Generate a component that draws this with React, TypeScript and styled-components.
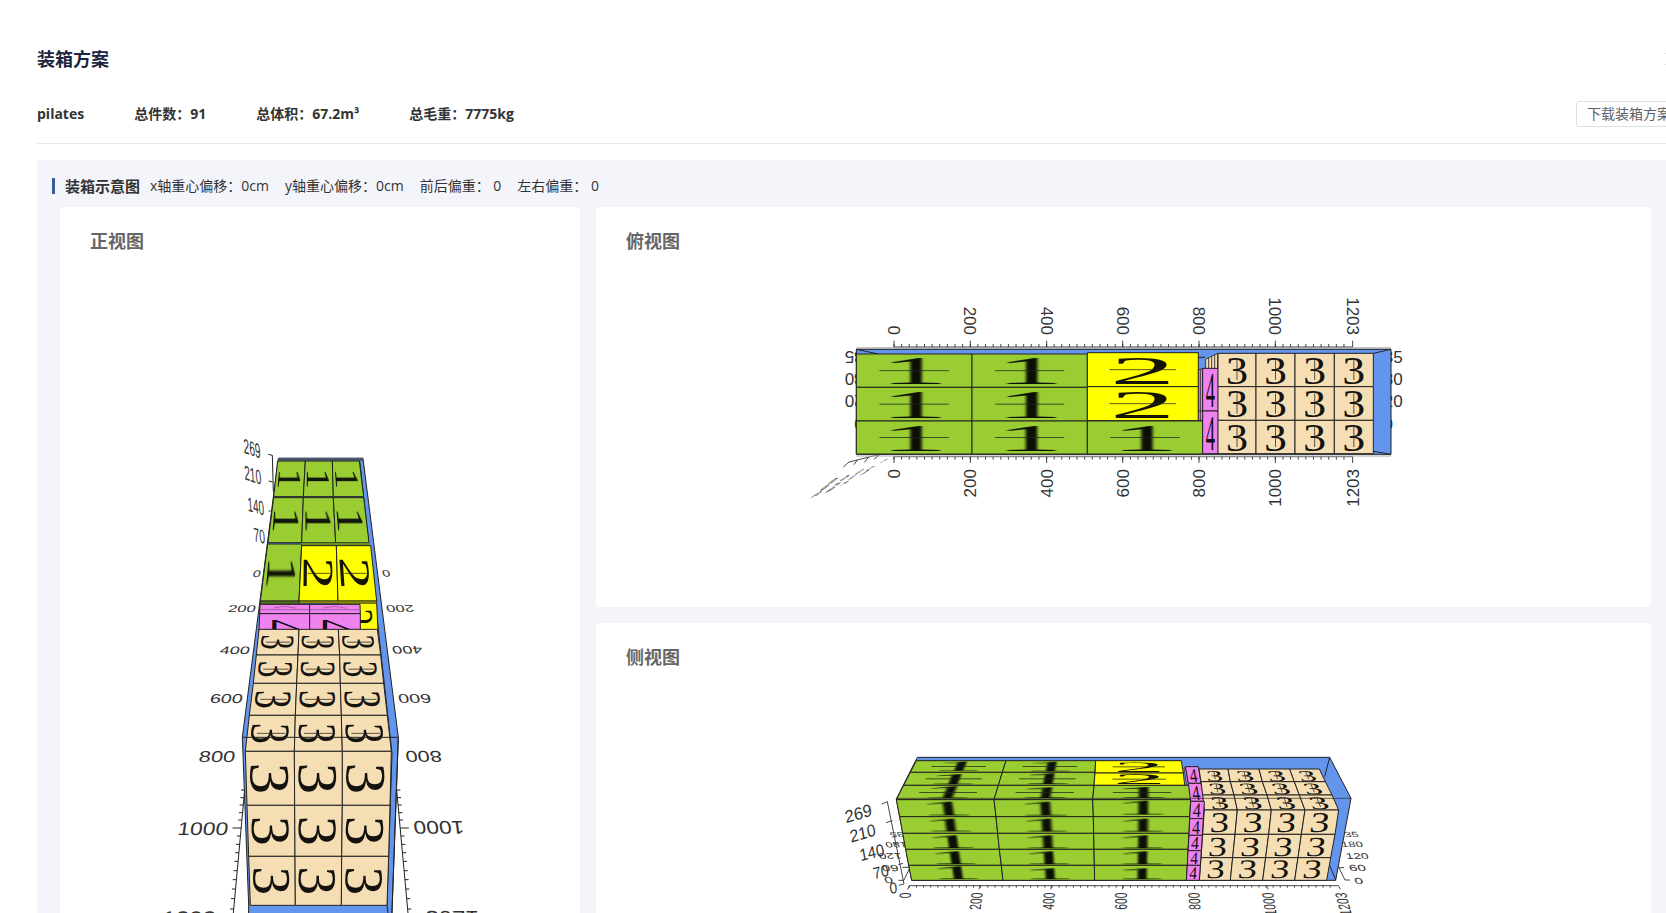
import React from 'react';
import styled, { createGlobalStyle } from 'styled-components';
import { X } from 'lucide-react';

const GlobalStyle = createGlobalStyle`
  * { box-sizing: border-box; }
  body {
    margin: 0;
    background: #fff;
    color: #333;
    font-family: 'Open Sans', 'Noto Sans CJK SC', sans-serif;
    font-size: 14px;
    line-height: 20px;
  }
`;

const Page = styled.main`
  height: 100vh;
  overflow: hidden;
  padding: 44px 0 0 37px;
`;

const Header = styled.header`
  display: flex;
  align-items: center;
  justify-content: space-between;
  height: 30px;
  margin-bottom: 24px;
`;

const Title = styled.h1`
  margin: 0;
  font-size: 18px;
  line-height: 28px;
  color: #1b2440;
`;

const CloseButton = styled.button`
  display: flex;
  flex: none;
  margin-right: -15px;
  padding: 0;
  border: 0;
  background: none;
  color: #909399;
`;

const Summary = styled.section`
  display: flex;
  align-items: center;
  gap: 50px;
  height: 46px;
  padding-bottom: 14px;
  border-bottom: 1px solid #e8e8ea;
  font-weight: 700;
  margin-bottom: 16px;
  white-space: nowrap;
`;

const DownloadButton = styled.button`
  flex: none;
  height: 26px;
  margin: 0 -16px 0 auto;
  padding: 0 10px;
  border: 1px solid #dcdfe6;
  border-radius: 3px;
  background: #fff;
  color: #606266;
  font: inherit;
  font-weight: 400;
`;

const Panel = styled.section`
  padding: 16px 15px;
  border-radius: 4px 0 0 4px;
  background: #f4f5fa;
`;

const PanelHeader = styled.div`
  display: flex;
  align-items: center;
  gap: 16px;
  height: 20px;
  margin-bottom: 11px;
  white-space: nowrap;
`;

const PanelTitle = styled.h2`
  display: flex;
  align-items: center;
  gap: 10px;
  margin: 0 -6px 0 0;
  font-size: 15px;
  line-height: 20px;

  &::before {
    content: '';
    width: 3px;
    height: 16px;
    background: #3a5c9b;
  }
`;

const Views = styled.div`
  display: grid;
  grid-template-columns: 520fr 1055fr;
  gap: 16px;
  padding-left: 8px;
`;

const Card = styled.article<{ $tall?: boolean }>`
  display: flex;
  flex-direction: column;
  align-items: center;
  grid-row: ${(p) => (p.$tall ? 'span 2' : 'auto')};
  min-width: 0;
  border-radius: 4px;
  background: #fff;
`;

const CardTitle = styled.h3`
  align-self: stretch;
  margin: 0;
  padding: 20px 30px;
  font-size: 18px;
  line-height: 28px;
  color: #666;
`;

const Drawing = styled.svg`
  display: block;
  flex: none;
  max-width: 100%;
`;

const Definitions = styled.svg`
  position: absolute;
  width: 0;
  height: 0;
`;

const AxisText = styled.text`
  font-family: 'Liberation Sans', sans-serif;
  font-size: 51px;
  fill: #333;
`;

const BoxText = styled.text`
  font-family: 'Liberation Serif', serif;
  font-size: 118px;
  text-anchor: middle;
  fill: #000;
  fill-opacity: 0.92;
`;

const GREEN = '#9acd32';
const YELLOW = '#ffff00';
const WHEAT = '#f5deb3';
const VIOLET = '#ee82ee';
const BLUE = '#6495ed';
const INK = '#222';

type Pt = [number, number];
type Quad = [Pt, Pt, Pt, Pt];

interface FaceProps {
  quad: Quad;
  fill: string;
  label?: string;
  turned?: boolean;
  rule?: 'h' | 'v';
}

/* One carton side: corners go clockwise from the top left; a turned side has its number rotated clockwise. */
function Face({ quad, fill, label, turned, rule }: FaceProps) {
  const [a, b, c, d] = turned ? [quad[1], quad[2], quad[3], quad[0]] : quad;
  const u: Pt = [(b[0] + c[0] - a[0] - d[0]) / 200, (b[1] + c[1] - a[1] - d[1]) / 200];
  const v: Pt = [(c[0] + d[0] - a[0] - b[0]) / 200, (c[1] + d[1] - a[1] - b[1]) / 200];
  const o: Pt = [
    (a[0] + b[0] + c[0] + d[0]) / 4 - 50 * (u[0] + v[0]),
    (a[1] + b[1] + c[1] + d[1]) / 4 - 50 * (u[1] + v[1]),
  ];
  return (
    <g>
      <polygon points={quad.map((p) => p.join(',')).join(' ')} fill={fill} stroke={INK} strokeWidth={3} />
      <g transform={`matrix(${u[0]} ${u[1]} ${v[0]} ${v[1]} ${o[0]} ${o[1]})`}>
        {label && (
          <BoxText x={50} y={91} filter={label === '1' ? 'url(#texture)' : undefined}>
            {label}
          </BoxText>
        )}
        {rule && (
          <path
            d={rule === 'h' ? 'M20 50H80' : 'M50 20V80'}
            stroke="#222"
            strokeWidth={1}
            vectorEffect="non-scaling-stroke"
            strokeOpacity={0.75}
            fill="none"
          />
        )}
      </g>
    </g>
  );
}

interface GridProps extends Omit<FaceProps, 'quad'> {
  rows: [number, number[]][];
}

/* A stack of sides; each entry is a boundary line: its y and the x of every corner on it. */
function Grid({ rows, ...face }: GridProps) {
  return (
    <>
      {rows.slice(1).map(([y1, xs1], i) => {
        const [y0, xs0] = rows[i];
        return xs1.slice(1).map((x, j) => (
          <Face key={`${i}-${j}`} quad={[[xs0[j], y0], [xs0[j + 1], y0], [x, y1], [xs1[j], y1]]} {...face} />
        ));
      })}
    </>
  );
}

interface LabelProps {
  children: string;
  x: number;
  y: number;
  m?: [number, number, number, number];
  end?: boolean;
}

function Label({ children, x, y, m = [1, 0, 0, 1], end }: LabelProps) {
  return (
    <AxisText transform={`matrix(${m.join(' ')} ${x} ${y})`} textAnchor={end ? 'end' : 'start'}>
      {children}
    </AxisText>
  );
}

const FRONT_SCALE: [string, number, number, number, number, number, number][] = [
  // text, left end, top, bottom, right start, width factor, height factor
  ['0', 240, -90, -70, 604, 0.85, 0.56],
  ['200', 225, 15, 36, 616, 0.98, 0.58],
  ['400', 207, 138, 161, 634, 1.06, 0.64],
  ['600', 186, 282, 309, 652, 1.16, 0.75],
  ['800', 163, 453, 487, 674, 1.28, 0.92],
  ['1000', 142, 664, 704, 698, 1.34, 1.08],
  ['1203', 104, 932, 978, 735, 1.42, 1.25],
];

const FRONT_TICKS = [570, 593, 615, 638, 660, 684, 708, 733, 758, 784, 812, 839, 867, 896, 927, 958];

function FrontView() {
  return (
    <Drawing width={320} height={748} viewBox="-60 -975 960 2244" role="img" aria-label="正视图">
      <g fill="none" stroke={INK} strokeWidth={3}>
        <path d="M265 -437L277 -434L280 -325M266 -357L278 -354M266 -267H272" />
        <path d="M194 570L150 1048M650 570L694 1048" />
        {FRONT_TICKS.map((y) => {
          const d = (y - 570) * 0.092;
          const len = y === 684 ? 26 : 11;
          return <path key={y} d={`M${194 - d} ${y}h${-len}M${650 + d} ${y}h${len}`} />;
        })}
      </g>
      {FRONT_SCALE.map(([t, left, top, bottom, right, w, h]) => (
        <g key={t}>
          <Label x={left} y={bottom} m={[w, 0, -0.15, h]} end>{t}</Label>
          <Label x={right} y={top} m={[-w, 0, -0.15, -h]} end>{t}</Label>
        </g>
      ))}
      <Label x={192} y={-442} m={[0.6, 0.22, 0.08, 1.22]}>269</Label>
      <Label x={194} y={-362} m={[0.6, 0.2, 0.08, 1.2]}>210</Label>
      <Label x={204} y={-268} m={[0.58, 0.18, 0.08, 1.18]}>140</Label>
      <Label x={222} y={-177} m={[0.6, 0.16, 0.08, 1.14]}>70</Label>

      <polygon
        points="295,-425 549,-425 655,412 635,960 628,1100 204,1100 206,915 187,412"
        fill={BLUE}
        stroke={INK}
        strokeWidth={3}
      />
      <path d="M295 -422H548" stroke="#46566b" strokeWidth={9} />
      <path d="M539 -417L636 460L621 916L632 1000" fill="none" stroke={INK} strokeWidth={3} />
      <path d="M655 412L636 940" stroke={INK} strokeWidth={3} />
      <Grid rows={[[-417, [293, 376, 457, 538]], [-310, [281, 370, 460, 551]]]} fill={GREEN} label="1" turned rule="v" />
      <Grid rows={[[-307, [281, 370, 460, 551]], [-172, [264, 365, 467, 567]]]} fill={GREEN} label="1" turned rule="v" />
      <Grid rows={[[-168, [263, 365]], [3, [241, 357]]]} fill={GREEN} label="1" turned rule="v" />
      <path d="M365 -172L567 -172L572 -162L365 -162Z" fill="#6b8e23" />
      <Grid rows={[[-163, [365, 469, 572]], [3, [357, 474, 590]]]} fill={YELLOW} label="2" turned rule="v" />
      <Face quad={[[474, 8], [590, 8], [594, 94], [474, 94]]} fill={YELLOW} label="2" turned />
      <path d="M241 3H357V13H240Z" fill="#4f6b1c" stroke={INK} strokeWidth={2} />
      <path d="M357 3H590V10H357Z" fill="#9a9a00" stroke={INK} strokeWidth={2} />
      <Grid rows={[[13, [240, 389, 540]], [41, [239, 389, 541]]]} fill={VIOLET} turned />
      <path d="M242 29H538M280 24l35-5 35 6M430 24l35-5 35 6" stroke="#8c4a8c" strokeWidth={2} fill="none" />
      <Grid rows={[[41, [239, 389, 541]], [124, [236, 389, 541]]]} fill={VIOLET} label="4" turned />
      <Grid
        rows={[
          [88, [237, 357, 475, 592]],
          [165, [229, 354, 479, 602]],
          [250, [220, 350, 481, 611]],
          [346, [208, 346, 484, 622]],
          [454, [196, 343, 487, 634]],
        ]}
        fill={WHEAT}
        label="3"
        turned
        rule="v"
      />
      <Grid
        rows={[
          [454, [196, 343, 487, 634]],
          [616, [201, 344, 487, 630]],
          [769, [206, 345, 485, 626]],
          [916, [211, 346, 484, 621]],
        ]}
        fill={WHEAT}
        label="3"
        turned
      />
      <path d="M187 412H655" stroke={INK} strokeWidth={3} />
    </Drawing>
  );
}

const TOP_SCALE: [string, number][] = [
  ['0', 282], ['200', 511], ['400', 740], ['600', 968], ['800', 1197], ['1000', 1426], ['1203', 1658],
];

function TopView() {
  const minor = Array.from({ length: 60 }, (_, i) => 282 + i * 22.88);
  return (
    <Drawing width={641} height={332} viewBox="9 -45 1923 996" role="img" aria-label="俯视图">
      <g fill="none" stroke={INK} strokeWidth={2.5}>
        <path d="M282 171H1658M282 500H1658" />
        {minor.map((x) => <path key={x} d={`M${x} 171v-9M${x} 500v9`} />)}
        {TOP_SCALE.map(([t, x]) => <path key={t} d={`M${x} 171v-19M${x} 500v19`} />)}
        <path d="M240 493L147 516L130 531M172 510l-10 14M205 502l-12 15M240 493l-18 15" />
      </g>
      {TOP_SCALE.map(([t, x]) => (
        <g key={t}>
          <Label x={x - 18} y={135} m={[0, 1, -1, 0]} end>{t}</Label>
          <Label x={x + 18} y={537} m={[0, -1, 1, 0]} end>{t}</Label>
        </g>
      ))}
      {[['235', 184, 220], ['180', 248, 284], ['120', 316, 352], ['60', 384, 420]].map(([t, top, base]) => (
        <g key={t}>
          <Label x={t === '60' ? 163 : 134} y={Number(top)} m={[-1, 0, 0, -1]} end>{String(t)}</Label>
          <Label x={t === '60' ? 1779 : 1808} y={Number(base)} end>{String(t)}</Label>
        </g>
      ))}
      <g stroke={INK} strokeWidth={1}>
        <Label x={30} y={626} m={[0.84, -0.7, -0.5, 0.22]}>269</Label>
        <Label x={72} y={612} m={[0.76, -0.62, -0.48, 0.22]}>210</Label>
        <Label x={118} y={590} m={[0.74, -0.58, -0.46, 0.22]}>140</Label>
        <Label x={172} y={562} m={[0.74, -0.54, -0.44, 0.22]}>70</Label>
        <Label x={234} y={523} m={[0.74, -0.46, -0.42, 0.22]}>0</Label>
      </g>

      <path d="M169 178H1773V493H169Z" fill={BLUE} stroke={INK} strokeWidth={3} />
      <path d="M169 174H1773" stroke="#888" strokeWidth={3} />
      <path d="M169 178L235 192M1195 202H1215M1720 190L1773 178M1720 484L1773 493" stroke={INK} strokeWidth={3} />
      <Grid rows={[[192, [169, 516, 862]], [292, [169, 516, 862]], [393, [169, 516, 862]], [492, [169, 516, 862]]]} fill={GREEN} label="1" rule="h" />
      <Grid rows={[[188, [862, 1195]], [290, [862, 1195]], [392, [862, 1195]]]} fill={YELLOW} label="2" rule="h" />
      <Grid rows={[[393, [862, 1208]], [492, [862, 1208]]]} fill={GREEN} label="1" rule="h" />
      <path d="M1217 208L1253 190V238H1217ZM1226 204V238M1235 200V238M1244 195V238" fill={WHEAT} stroke={INK} strokeWidth={2.5} />
      <path d="M1195 239L1208 236V391H1195ZM1201 238V391M1195 363H1208" fill={VIOLET} stroke={INK} strokeWidth={2.5} />
      <Grid rows={[[235, [1208, 1255]], [363, [1208, 1255]], [491, [1208, 1255]]]} fill={VIOLET} label="4" />
      <Grid
        rows={[190, 290, 391, 491].map((y) => [y, [1254, 1368, 1485, 1603, 1720]] as [number, number[]])}
        fill={WHEAT}
        label="3"
        rule="v"
      />
      <path d="M169 498H1773" stroke="#aaa" strokeWidth={3} />
    </Drawing>
  );
}

const SIDE_SCALE: [string, number, number][] = [
  ['0', 238, 0.12], ['200', 450, 0.08], ['400', 664, 0.04], ['600', 878, 0], ['800', 1093, -0.04], ['1000', 1310, -0.1], ['1203', 1525, -0.16],
];

function SideView() {
  const minor = Array.from({ length: 60 }, (_, i) => 238 + i * 21.4);
  return (
    <Drawing width={615} height={332} viewBox="-42 -147 1845 996" role="img" aria-label="侧视图">
      <g fill="none" stroke={INK} strokeWidth={2.5}>
        <path d="M238 437H1525M155 192L172 185L222 432L207 436M168 248L187 242M192 312l12-4M205 374l14-4M222 420L242 378M217 382h22M205 421h17" />
        <path d="M1520 370L1545 420H1560M1527 383H1542" />
        {minor.map((x) => <path key={x} d={`M${x} 437v6`} />)}
        {SIDE_SCALE.map(([t, x, s]) => <path key={t} d={`M${x} 437l${-s * 40} 11`} />)}
      </g>
      {SIDE_SCALE.map(([t, x, s]) => (
        <Label key={t} x={x + 13 - s * 60} y={458} m={[s, -0.6, 0.95, 0]} end>{t}</Label>
      ))}
      <Label x={48} y={250} m={[0.94, -0.28, 0.18, 1]}>269</Label>
      <Label x={63} y={308} m={[0.9, -0.26, 0.18, 1]}>210</Label>
      <Label x={92} y={364} m={[0.86, -0.22, 0.18, 0.98]}>140</Label>
      <Label x={132} y={418} m={[0.82, -0.2, 0.16, 0.95]}>70</Label>
      <Label x={181} y={462} m={[0.8, -0.16, 0.12, 0.9]}>0</Label>
      <Label x={177} y={276} m={[-0.74, 0, -0.15, -0.44]} end>235</Label>
      <Label x={164} y={305} m={[-0.76, 0, -0.15, -0.46]} end>180</Label>
      <Label x={144} y={339} m={[-0.8, 0, -0.15, -0.5]} end>120</Label>
      <Label x={152} y={374} m={[-0.9, 0, -0.15, -0.52]} end>60</Label>
      <Label x={160} y={412} m={[-0.92, 0, -0.15, -0.52]} end>0</Label>
      <Label x={1588} y={292} m={[0.74, 0, 0.15, 0.44]} end>235</Label>
      <Label x={1601} y={322} m={[0.76, 0, 0.15, 0.46]} end>180</Label>
      <Label x={1618} y={357} m={[0.8, 0, 0.15, 0.5]} end>120</Label>
      <Label x={1610} y={393} m={[0.9, 0, 0.15, 0.52]} end>60</Label>
      <Label x={1602} y={431} m={[0.92, 0, 0.15, 0.52]} end>0</Label>

      <polygon points="262,52 1499,52 1563,175 1517,421 245,421 199,177" fill={BLUE} stroke={INK} strokeWidth={3} />
      <path d="M1499 52L1484 110M1500 378L1517 420" stroke={INK} strokeWidth={3} />
      <Grid
        rows={[[62, [259, 528, 797]], [97, [241, 517, 795]], [136, [221, 505, 792]], [179, [199, 492, 788]]]}
        fill={GREEN}
        label="1"
        rule="h"
      />
      <Grid rows={[[62, [797, 1054]], [99, [795, 1060]], [136, [792, 1064]]]} fill={YELLOW} label="2" rule="h" />
      <Grid rows={[[136, [792, 1080]], [179, [788, 1084]]]} fill={GREEN} label="1" rule="h" />
      <Grid
        rows={[
          [179, [199, 492, 788, 1082]],
          [230, [209, 498, 790, 1079]],
          [280, [218, 503, 791, 1077]],
          [328, [227, 508, 792, 1074]],
          [376, [236, 514, 793, 1072]],
          [421, [245, 519, 794, 1069]],
        ]}
        fill={GREEN}
        label="1"
      />
      <path d="M1062 84L1066 82L1076 134H1070Z" fill={VIOLET} stroke={INK} strokeWidth={2} />
      <Grid rows={[[80, [1066, 1105]], [130, [1075, 1113]], [184, [1082, 1123]]]} fill={VIOLET} label="4" />
      <Grid
        rows={[
          [87, [1107, 1194, 1287, 1379, 1468]],
          [125, [1113, 1201, 1297, 1393, 1486]],
          [165, [1118, 1212, 1311, 1408, 1506]],
          [210, [1123, 1222, 1324, 1425, 1526]],
        ]}
        fill={WHEAT}
        label="3"
        rule="v"
      />
      <Grid
        rows={[
          [210, [1123, 1222, 1324, 1425, 1526]],
          [283, [1118, 1215, 1316, 1414, 1515]],
          [353, [1113, 1208, 1307, 1404, 1502]],
          [421, [1108, 1201, 1298, 1394, 1490]],
        ]}
        fill={WHEAT}
        label="3"
      />
      <Grid
        rows={[
          [184, [1082, 1123]],
          [236, [1079, 1120]],
          [286, [1077, 1117]],
          [332, [1074, 1114]],
          [376, [1072, 1111]],
          [421, [1069, 1108]],
        ]}
        fill={VIOLET}
        label="4"
      />
      <path d="M199 175H1563" stroke={INK} strokeWidth={2.5} strokeOpacity={0.8} />
    </Drawing>
  );
}

/* The stretched number on the long cartons has soft sides. */
function TextureFilter() {
  return (
    <Definitions aria-hidden="true">
      <filter id="texture">
        <feGaussianBlur stdDeviation="1.4 0.6" />
      </filter>
    </Definitions>
  );
}

export default function App() {
  return (
    <Page>
      <GlobalStyle />
      <TextureFilter />
      <Header>
        <Title>装箱方案</Title>
        <CloseButton type="button" aria-label="关闭">
          <X size={20} strokeWidth={1} />
        </CloseButton>
      </Header>
      <Summary>
        <span>pilates</span>
        <span>总件数：91</span>
        <span>总体积：67.2m³</span>
        <span>总毛重：7775kg</span>
        <DownloadButton type="button">下载装箱方案</DownloadButton>
      </Summary>
      <Panel>
        <PanelHeader>
          <PanelTitle>装箱示意图</PanelTitle>
          <span>x轴重心偏移：0cm</span>
          <span>y轴重心偏移：0cm</span>
          <span>前后偏重： 0</span>
          <span>左右偏重： 0</span>
        </PanelHeader>
        <Views>
          <Card $tall>
            <CardTitle>正视图</CardTitle>
            <FrontView />
          </Card>
          <Card>
            <CardTitle>俯视图</CardTitle>
            <TopView />
          </Card>
          <Card>
            <CardTitle>侧视图</CardTitle>
            <SideView />
          </Card>
        </Views>
      </Panel>
    </Page>
  );
}
